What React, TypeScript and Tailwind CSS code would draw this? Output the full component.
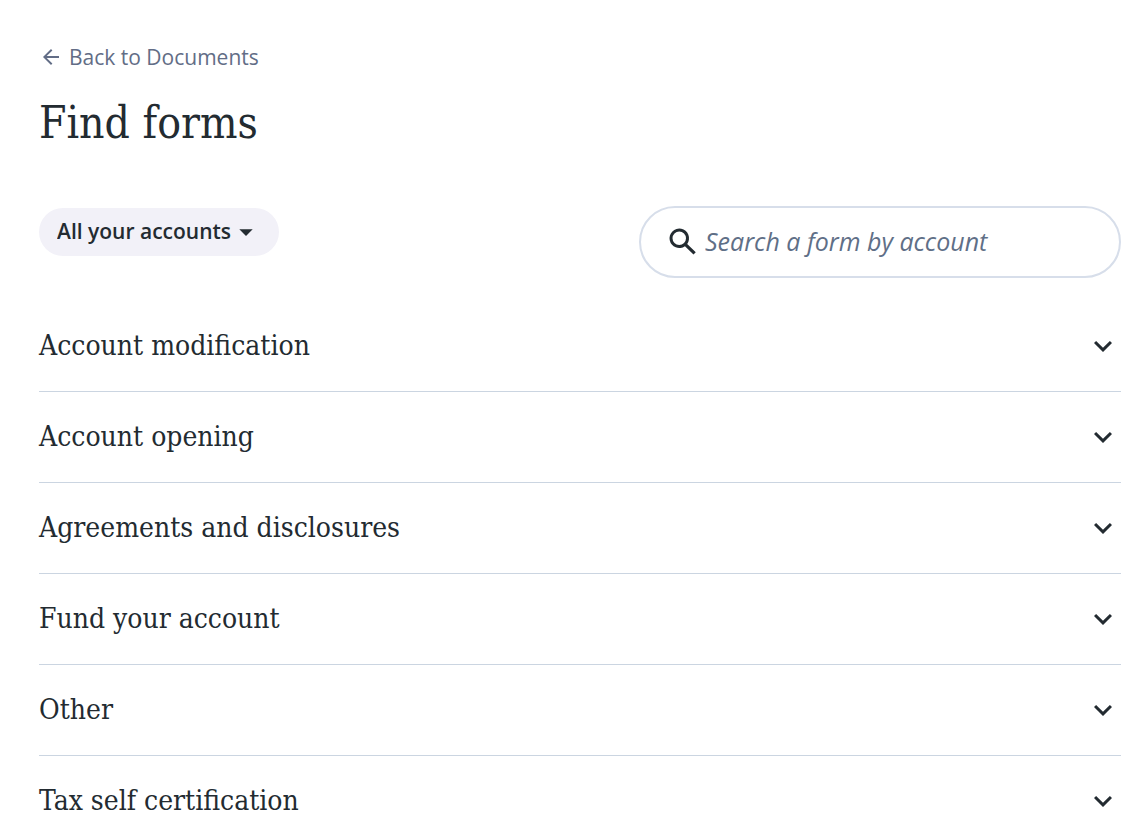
import { useState } from 'react';
import type { ReactNode } from 'react';

const categories = [
  'Account modification',
  'Account opening',
  'Agreements and disclosures',
  'Fund your account',
  'Other',
  'Tax self certification',
];

const Icon = ({ className, children }: { className: string; children: ReactNode }) => (
  <svg viewBox="0 0 24 24" fill="currentColor" aria-hidden="true" className={className}>
    {children}
  </svg>
);

const FormCategory = ({ title }: { title: string }) => {
  const [open, setOpen] = useState(false);

  return (
    <li className="border-b border-[#cbd5e1]">
      <h2>
        <button
          type="button"
          aria-expanded={open}
          onClick={() => setOpen(!open)}
          className="flex w-full items-center justify-between py-[27px] text-left font-['Roboto_Slab','DejaVu_Serif_Condensed','DejaVu_Serif',serif] text-[28px] leading-9"
        >
          {title}
          <Icon className={open ? 'size-9 shrink-0 rotate-180' : 'size-9 shrink-0'}>
            <path d="M16.59 8.59 12 13.17 7.41 8.59 6 10l6 6 6-6z" />
          </Icon>
        </button>
      </h2>
      {open && <p className="pb-7 text-[21px] text-[#5e6b82]">{title}</p>}
    </li>
  );
};

const App = () => {
  const [search, setSearch] = useState('');
  const visible = categories.filter((title) => title.toLowerCase().includes(search.toLowerCase()));

  return (
    <main className="bg-white pt-10 pr-6 pl-[39px] font-['Open_Sans',sans-serif] text-[#232b31]">
      <a href="#documents" className="flex w-fit items-center gap-1.5 text-[21px] leading-[34px] text-[#626d86]">
        <Icon className="size-6">
          <path d="M20 11H7.7l5.7-5.6L12 4l-8 8 8 8 1.4-1.4L7.7 13H20z" />
        </Icon>
        Back to Documents
      </a>

      <h1 className="mt-[19px] font-['Roboto_Slab','DejaVu_Serif_Condensed','DejaVu_Serif',serif] text-[44px] leading-[60px]">
        Find forms
      </h1>

      <div className="mt-[53px] flex items-start justify-between gap-6">
        <div className="relative mt-0.5">
          <select
            aria-label="Account"
            className="h-12 w-60 appearance-none rounded-full bg-[#f2f1f8] pr-12 pl-[18px] text-[21px] font-semibold"
          >
            <option>All your accounts</option>
          </select>
          <Icon className="pointer-events-none absolute top-2 right-[17px] size-8">
            <path d="m7 10 5 5 5-5z" />
          </Icon>
        </div>

        <label className="flex h-[72px] w-full max-w-[482px] items-center gap-1 rounded-full border-2 border-[#d7deea] pr-6 pl-6">
          <Icon className="size-9 shrink-0">
            <path d="M14.8 13.3a6.5 6.5 0 1 0-1.5 1.5l5.7 5.6 1.5-1.5zM9.5 14a4.5 4.5 0 1 1 0-9 4.5 4.5 0 0 1 0 9" />
          </Icon>
          <input
            type="text"
            aria-label="Search a form by account"
            placeholder="Search a form by account"
            value={search}
            onChange={(e) => setSearch(e.target.value)}
            className="w-full min-w-0 text-[25px] outline-none placeholder:text-[#5f6f87] placeholder:italic"
          />
        </label>
      </div>

      <ul className="mt-[23px]">
        {visible.map((title) => (
          <FormCategory key={title} title={title} />
        ))}
      </ul>
    </main>
  );
};

export default App;
